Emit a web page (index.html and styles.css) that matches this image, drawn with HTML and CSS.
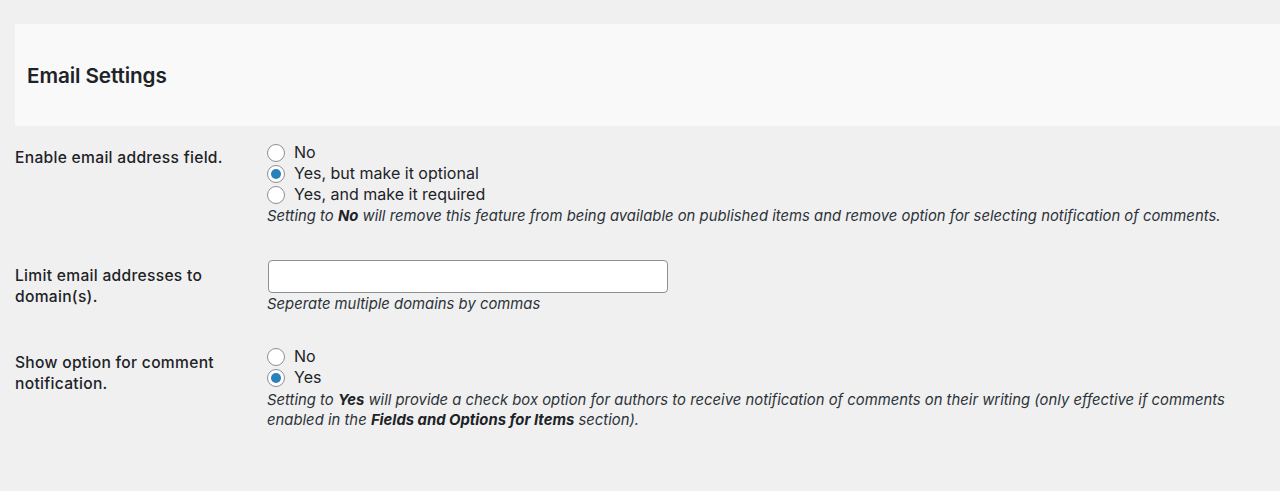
FILE: index.html
```html
<!DOCTYPE html>
<html lang="en">
<head>
<meta charset="utf-8">
<title>Email Settings</title>
<link rel="stylesheet" href="styles.css">
</head>
<body>
<div class="section-head">
  <h2 class="section-title">Email Settings</h2>
</div>
<div class="form-table">
  <div class="row row-radio">
    <div class="label">Enable email address field.</div>
    <div class="field">
      <label class="radio-line"><span class="radio"></span>No</label>
      <label class="radio-line"><span class="radio checked"></span>Yes, but make it optional</label>
      <label class="radio-line"><span class="radio"></span>Yes, and make it required</label>
      <p class="desc">Setting to <b>No</b> will remove this feature from being available on published items and remove option for selecting notification of comments.</p>
    </div>
  </div>
  <div class="row row-input">
    <div class="label">Limit email addresses to domain(s).</div>
    <div class="field">
      <div class="text-input"></div>
      <p class="desc">Seperate multiple domains by commas</p>
    </div>
  </div>
  <div class="row row-radio2">
    <div class="label">Show option for comment notification.</div>
    <div class="field">
      <label class="radio-line"><span class="radio"></span>No</label>
      <label class="radio-line"><span class="radio checked"></span>Yes</label>
      <p class="desc desc-long">Setting to <b>Yes</b> will provide a check box option for authors to receive notification of comments on their writing (only effective if comments enabled in the <b>Fields and Options for Items</b> section).</p>
    </div>
  </div>
</div>
</body>
</html>
```

FILE: styles.css
```css
html, body {
  margin: 0;
  padding: 0;
  background: #f0f0f1;
  color: #1d2327;
  font-family: Inter, "Noto Sans", "Liberation Sans", sans-serif;
}

.section-head {
  margin: 24px 0 0 15px;
  height: 102px;
  background: #f9f9f9;
  display: flex;
  align-items: center;
  padding-left: 12px;
}

.section-title {
  margin: 0;
  font-size: 20.7px;
  font-weight: 600;
  color: #1d2327;
  letter-spacing: -0.1px;
}

.form-table {
  padding-left: 15px;
}

.row {
  display: grid;
  grid-template-columns: 252px 1fr;
}

.label {
  font-size: 15.6px;
  font-weight: 500;
  line-height: 21px;
  letter-spacing: 0.3px;
  width: 215px;
  color: #1d2327;
}

.row-radio {
  padding-top: 16px;
  height: 113px;
}
.row-radio .label { padding-top: 5px; }

.row-input {
  padding-top: 5px;
  height: 82px;
}
.row-input .label { padding-top: 5px; }

.row-radio2 {
  padding-top: 4px;
}
.row-radio2 .label { padding-top: 6px; }

.field {
  font-size: 16px;
  line-height: 21px;
  padding-right: 40px;
}

.radio-line {
  display: flex;
  align-items: center;
  height: 21px;
  cursor: pointer;
}

.radio {
  box-sizing: border-box;
  width: 18px;
  height: 18px;
  border: 1px solid #8c8f94;
  border-radius: 50%;
  background: #fff;
  margin-right: 9px;
  display: inline-flex;
  align-items: center;
  justify-content: center;
}

.radio.checked::after {
  content: "";
  width: 10px;
  height: 10px;
  border-radius: 50%;
  background: #2a7fbd;
}

.desc {
  margin: 1px 0 0;
  font-size: 14.85px;
  line-height: 20px;
  font-style: italic;
  color: #2c3338;
}

.desc-long {
  margin-top: 2px;
}

.desc b {
  font-weight: 700;
  color: #1d2327;
}

.text-input {
  box-sizing: border-box;
  width: 400px;
  height: 33px;
  margin-left: 1px;
  border: 1px solid #8c8f94;
  border-radius: 4px;
  background: #fff;
}
```
